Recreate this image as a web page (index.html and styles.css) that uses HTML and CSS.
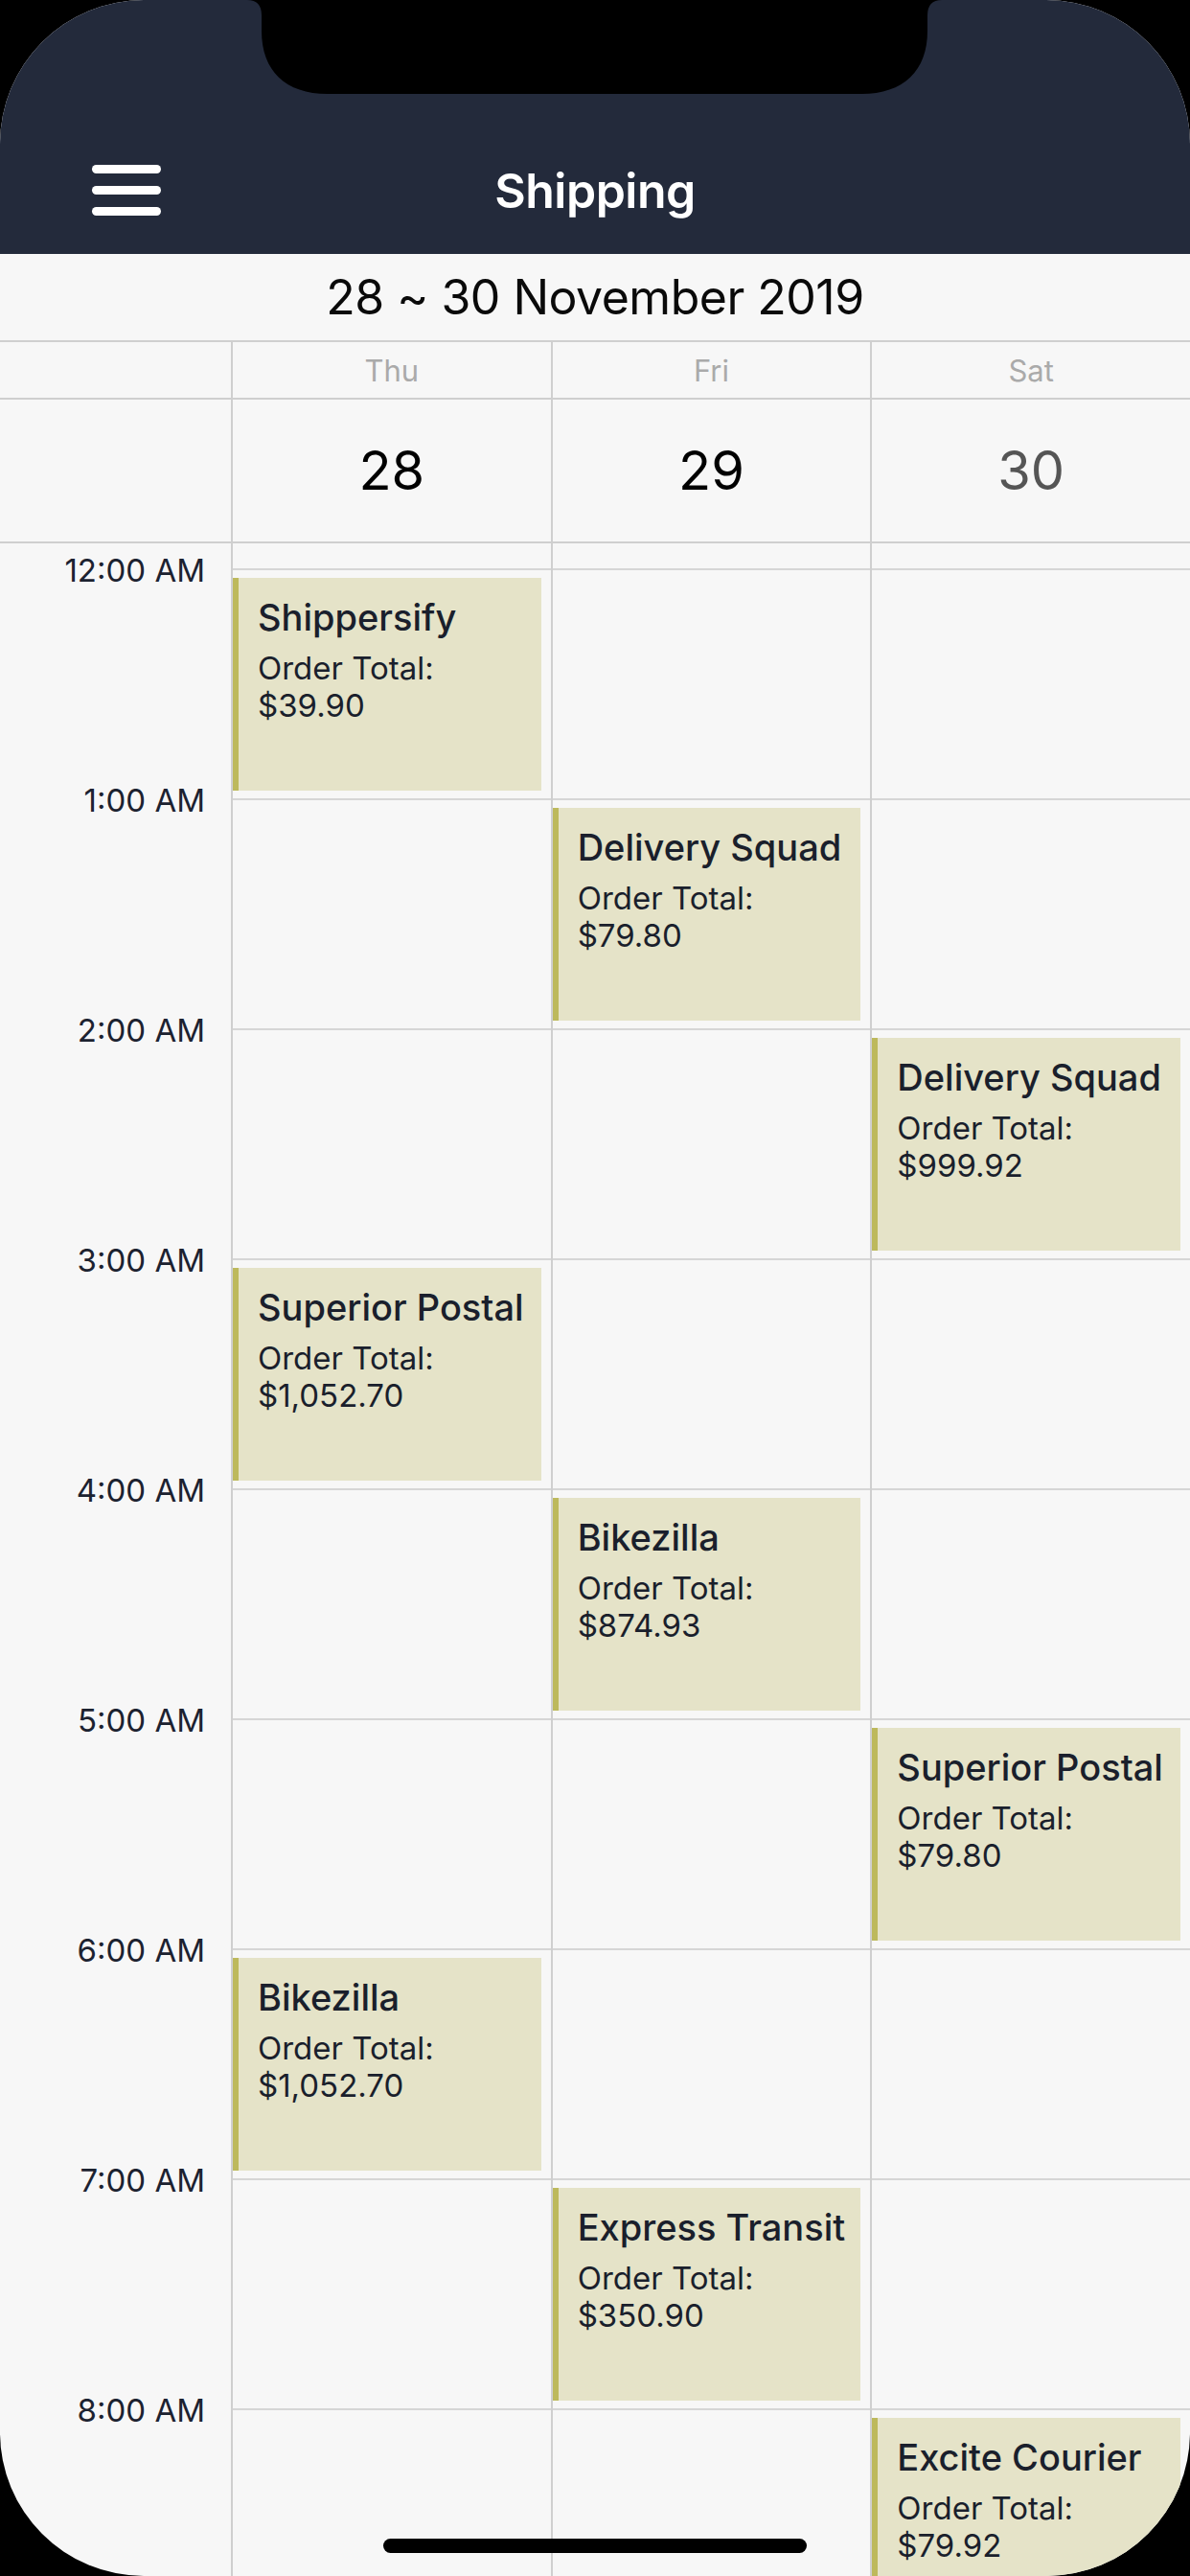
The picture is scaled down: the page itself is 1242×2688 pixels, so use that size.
FILE: index.html
```html
<!DOCTYPE html>
<html lang="en">
<head>
<meta charset="utf-8">
<title>Shipping</title>
<link rel="stylesheet" href="styles.css">
</head>
<body>
<div class="screen">
  <header class="appbar">
    <div class="nav">
      <div class="menu" aria-label="Menu"><span></span><span></span><span></span></div>
      <h1 class="title">Shipping</h1>
      <div class="nav-spacer"></div>
    </div>
  </header>

  <div class="range">28 ~ 30 November 2019</div>

  <div class="row dow">
    <div class="gutter"></div>
    <div class="cell">Thu</div>
    <div class="cell">Fri</div>
    <div class="cell">Sat</div>
  </div>

  <div class="row dates">
    <div class="gutter"></div>
    <div class="cell">28</div>
    <div class="cell">29</div>
    <div class="cell muted">30</div>
  </div>

  <div class="grid">
    <div class="times">
      <div class="time">12:00 AM</div>
      <div class="time">1:00 AM</div>
      <div class="time">2:00 AM</div>
      <div class="time">3:00 AM</div>
      <div class="time">4:00 AM</div>
      <div class="time">5:00 AM</div>
      <div class="time">6:00 AM</div>
      <div class="time">7:00 AM</div>
      <div class="time">8:00 AM</div>
    </div>

    <div class="day">
      <div class="slot"><div class="event"><div class="event-title">Shippersify</div><div class="event-text">Order Total:<br>$39.90</div></div></div>
      <div class="slot"></div>
      <div class="slot"></div>
      <div class="slot"><div class="event"><div class="event-title">Superior Postal</div><div class="event-text">Order Total:<br>$1,052.70</div></div></div>
      <div class="slot"></div>
      <div class="slot"></div>
      <div class="slot"><div class="event"><div class="event-title">Bikezilla</div><div class="event-text">Order Total:<br>$1,052.70</div></div></div>
      <div class="slot"></div>
      <div class="slot"></div>
    </div>

    <div class="day">
      <div class="slot"></div>
      <div class="slot"><div class="event"><div class="event-title">Delivery Squad</div><div class="event-text">Order Total:<br>$79.80</div></div></div>
      <div class="slot"></div>
      <div class="slot"></div>
      <div class="slot"><div class="event"><div class="event-title">Bikezilla</div><div class="event-text">Order Total:<br>$874.93</div></div></div>
      <div class="slot"></div>
      <div class="slot"></div>
      <div class="slot"><div class="event"><div class="event-title">Express Transit</div><div class="event-text">Order Total:<br>$350.90</div></div></div>
      <div class="slot"></div>
    </div>

    <div class="day">
      <div class="slot"></div>
      <div class="slot"></div>
      <div class="slot"><div class="event"><div class="event-title">Delivery Squad</div><div class="event-text">Order Total:<br>$999.92</div></div></div>
      <div class="slot"></div>
      <div class="slot"></div>
      <div class="slot"><div class="event"><div class="event-title">Superior Postal</div><div class="event-text">Order Total:<br>$79.80</div></div></div>
      <div class="slot"></div>
      <div class="slot"></div>
      <div class="slot"><div class="event"><div class="event-title">Excite Courier</div><div class="event-text">Order Total:<br>$79.92</div></div></div>
    </div>
  </div>

  <svg class="notch" width="1242" height="100" viewBox="0 0 1242 100" aria-hidden="true">
    <path d="M258 0 Q273 0 273 16 L273 32 C273 74 298 98 342 98 L899 98 C943 98 968 74 968 32 L968 16 Q968 0 983 0 Z" fill="#000"/>
  </svg>
  <div class="home-indicator"></div>
</div>
</body>
</html>
```

FILE: styles.css
```css
* {
  box-sizing: border-box;
}

html, body {
  margin: 0;
  padding: 0;
  background: #000;
}

body {
  font-family: "Inter", "Roboto", "Liberation Sans", sans-serif;
  color: #1c2230;
}

.screen {
  position: relative;
  width: 1242px;
  height: 2688px;
  overflow: hidden;
  border-radius: 150px;
  background: #f7f7f7;
}

/* App bar */
.appbar {
  height: 265px;
  background: #232a3b;
  padding-top: 132px;
}

.nav {
  height: 133px;
  display: grid;
  grid-template-columns: 1fr auto 1fr;
  align-items: center;
}

.menu {
  margin-left: 96px;
  width: 72px;
  display: flex;
  flex-direction: column;
  gap: 13px;
}

.menu span {
  display: block;
  height: 9px;
  border-radius: 4.5px;
  background: #fff;
}

.title {
  margin: 0;
  font-size: 50px;
  font-weight: 600;
  color: #fff;
  letter-spacing: -0.5px;
  line-height: 60px;
}

/* Date range */
.range {
  height: 92px;
  border-bottom: 2px solid #cfcfcf;
  display: flex;
  align-items: center;
  justify-content: center;
  font-size: 50px;
  font-weight: 400;
  color: #0a0a0a;
  letter-spacing: -0.5px;
}

.row {
  display: grid;
  grid-template-columns: 241px repeat(3, 1fr);
  border-bottom: 2px solid #cfcfcf;
}

.row .cell {
  border-left: 2px solid #cfcfcf;
  display: flex;
  align-items: center;
  justify-content: center;
}

.dow {
  height: 60px;
}

.dow .cell {
  font-size: 31px;
  color: #aaaaaa;
}

.dates {
  height: 150px;
}

.dates .cell {
  font-size: 56px;
  color: #000;
}

.dates .cell.muted {
  color: #555555;
}

/* Time grid */
.grid {
  display: grid;
  grid-template-columns: 241px repeat(3, 1fr);
}

.times {
  padding-top: 8px;
}

.time {
  height: 240px;
  line-height: 40px;
  font-size: 33px;
  text-align: right;
  padding-right: 27px;
  color: #1c2230;
}

.day {
  border-left: 2px solid #cfcfcf;
  padding-top: 26px;
}

.slot {
  height: 240px;
  border-top: 2px solid #d6d6d6;
  padding: 8px 10px 8px 0;
}

.event {
  height: 222px;
  background: #e5e3c8;
  border-left: 6px solid #bdb95c;
  padding: 18px 8px 0 20px;
  overflow: hidden;
}

.event-title {
  font-size: 38px;
  font-weight: 500;
  line-height: 46px;
  white-space: nowrap;
  color: #1a1f2c;
}

.event-text {
  margin-top: 11px;
  font-size: 33px;
  line-height: 39px;
  color: #1a1f2c;
}

/* Device overlays */
.notch {
  position: absolute;
  top: 0;
  left: 0;
  display: block;
}

.home-indicator {
  position: absolute;
  left: 400px;
  top: 2649px;
  width: 442px;
  height: 15px;
  border-radius: 8px;
  background: #000;
}
```
